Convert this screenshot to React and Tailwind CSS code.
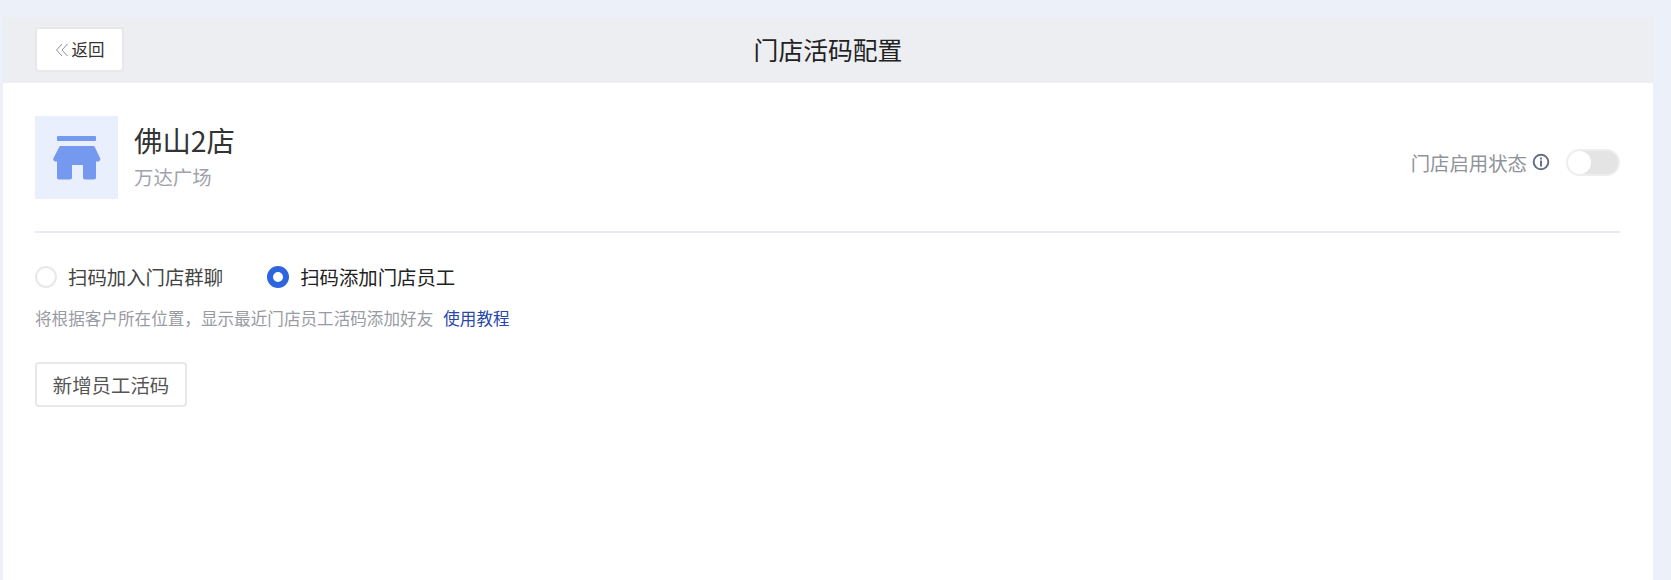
const font = { fontFamily: '"Noto Sans CJK SC", sans-serif' };

function StoreIcon() {
  return (
    <svg width="48" height="44" viewBox="0 0 48 44" fill="#7499ee">
      <rect x="4" y="0" width="39" height="5" rx="1" />
      <path d="M8 10h32c1 0 1.600.5 2 1.400l5 10.600c.8 2-.3 3.500-2 3.500h-2v16c0 1.200-.8 2-2 2h-9c-1.200 0-2-.8-2-2V29H19v12.500c0 1.200-.8 2-2 2H6c-1.200 0-2-.8-2-2v-16H2.500C.8 25.500-.3 24 .5 22L6 11.400C6.400 10.500 7 10 8 10z" />
    </svg>
  );
}

function InfoIcon() {
  return (
    <svg width="18" height="18" viewBox="0 0 18 18" fill="none">
      <circle cx="9" cy="9" r="7.300" stroke="#64708a" strokeWidth="2" />
      <rect x="8" y="4.500" width="2" height="2" fill="#64708a" />
      <rect x="8" y="7.500" width="2" height="6" fill="#64708a" />
    </svg>
  );
}

function Radio({ checked, label }) {
  return (
    <label className="flex items-center gap-[11px]">
      {checked ? (
        <span className="w-[22px] h-[22px] rounded-full border-[6px] border-[#2d64e0] bg-white" />
      ) : (
        <span className="w-[22px] h-[22px] rounded-full border-2 border-[#e8e8e8] bg-white" />
      )}
      <span className={checked ? "text-[19.400px] leading-[22px] text-[#222]" : "text-[19.400px] leading-[22px] text-[#444]"}>
        {label}
      </span>
    </label>
  );
}

export default function App() {
  return (
    <div className="h-screen bg-[#ebf0f9] pt-[17px] pl-[3px] pr-[18px] overflow-hidden" style={font}>
      <div className="h-full bg-white">
        <div className="relative h-[66px] bg-[#edeef2] flex items-center justify-center">
          <button className="absolute left-[32px] top-[10px] w-[89px] h-[45px] bg-white border-2 border-[#e8e8e8] rounded flex items-center justify-center gap-[3px] text-[16.500px] text-[#333]">
            <svg width="14" height="14" viewBox="0 0 14 14" fill="none" stroke="#8a8f9c" strokeWidth="1">
              <path d="M7 1L1.500 7L7 13M12.500 1L7 7L12.500 13" />
            </svg>
            返回
          </button>
          <h1 className="text-[24.800px] font-normal text-[#222]">门店活码配置</h1>
        </div>

        <div className="pl-[32px] pr-[33px] pt-[33px]">
          <div className="flex items-center justify-between pb-[32px] border-b-2 border-[#e8ecf2]">
            <div className="flex items-center gap-[16px]">
              <div className="w-[83px] h-[83px] bg-[#e9effc] flex items-center justify-center">
                <StoreIcon />
              </div>
              <div className="-mt-[1px]">
                <div className="text-[28.400px] leading-[36px] text-[#333] -mt-[3px]">佛山2店</div>
                <div className="text-[19.400px] leading-[26px] text-[#a0a3ab] mt-[6px]">万达广场</div>
              </div>
            </div>
            <div className="flex items-center mt-[10px]">
              <span className="text-[19.400px] text-[#909399]">门店启用状态</span>
              <span className="ml-[5px] mr-[16px] flex"><InfoIcon /></span>
              <span className="w-[54px] h-[27px] rounded-full bg-[#e4e4e4] border-2 border-[#eeeeee] flex items-center">
                <span className="w-[23px] h-[23px] rounded-full bg-white" />
              </span>
            </div>
          </div>

          <div className="flex items-center gap-[44px] mt-[33px]">
            <Radio label="扫码加入门店群聊" />
            <Radio checked label="扫码添加门店员工" />
          </div>

          <p className="mt-[18px] text-[16.600px] leading-[24px] text-[#999ba3]">
            将根据客户所在位置，显示最近门店员工活码添加好友
            <span className="ml-[10px] text-[#2a47a8]">使用教程</span>
          </p>

          <button className="mt-[32px] w-[152px] h-[45px] bg-white border-2 border-[#e8e8e8] rounded text-[19.400px] text-[#555]">
            新增员工活码
          </button>
        </div>
      </div>
    </div>
  );
}
